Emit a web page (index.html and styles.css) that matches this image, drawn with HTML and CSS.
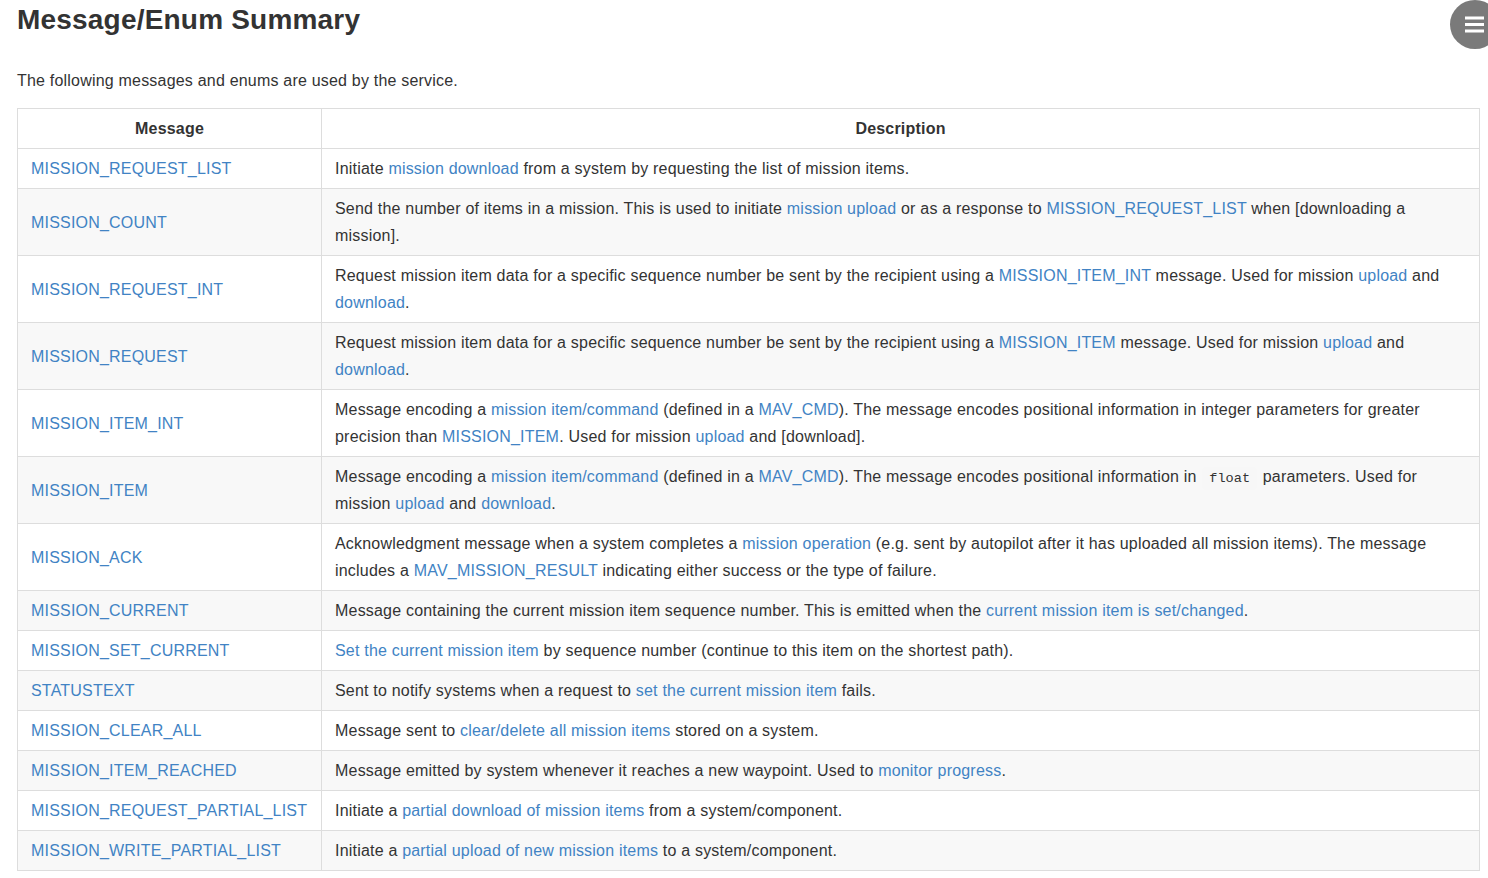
FILE: index.html
```html
<!DOCTYPE html>
<html>
<head>
<meta charset="utf-8">
<link rel="stylesheet" href="styles.css">
</head>
<body>
<div class="page">
  <h2 class="title">Message/Enum Summary</h2>
  <p class="intro">The following messages and enums are used by the service.</p>
  <table class="summary">
    <colgroup><col class="col-msg"><col class="col-desc"></colgroup>
    <thead>
      <tr><th>Message</th><th>Description</th></tr>
    </thead>
    <tbody>
      <tr><td><a href="#">MISSION_REQUEST_LIST</a></td><td>Initiate <a href="#">mission download</a> from a system by requesting the list of mission items.</td></tr>
      <tr><td><a href="#">MISSION_COUNT</a></td><td>Send the number of items in a mission. This is used to initiate <a href="#">mission upload</a> or as a response to <a href="#">MISSION_REQUEST_LIST</a> when [downloading a mission].</td></tr>
      <tr><td><a href="#">MISSION_REQUEST_INT</a></td><td>Request mission item data for a specific sequence number be sent by the recipient using a <a href="#">MISSION_ITEM_INT</a> message. Used for mission <a href="#">upload</a> and <a href="#">download</a>.</td></tr>
      <tr><td><a href="#">MISSION_REQUEST</a></td><td>Request mission item data for a specific sequence number be sent by the recipient using a <a href="#">MISSION_ITEM</a> message. Used for mission <a href="#">upload</a> and <a href="#">download</a>.</td></tr>
      <tr><td><a href="#">MISSION_ITEM_INT</a></td><td>Message encoding a <a href="#">mission item/command</a> (defined in a <a href="#">MAV_CMD</a>). The message encodes positional information in integer parameters for greater precision than <a href="#">MISSION_ITEM</a>. Used for mission <a href="#">upload</a> and [download].</td></tr>
      <tr><td><a href="#">MISSION_ITEM</a></td><td>Message encoding a <a href="#">mission item/command</a> (defined in a <a href="#">MAV_CMD</a>). The message encodes positional information in <code>float</code> parameters. Used for mission <a href="#">upload</a> and <a href="#">download</a>.</td></tr>
      <tr><td><a href="#">MISSION_ACK</a></td><td>Acknowledgment message when a system completes a <a href="#">mission operation</a> (e.g. sent by autopilot after it has uploaded all mission items). The message includes a <a href="#">MAV_MISSION_RESULT</a> indicating either success or the type of failure.</td></tr>
      <tr><td><a href="#">MISSION_CURRENT</a></td><td>Message containing the current mission item sequence number. This is emitted when the <a href="#">current mission item is set/changed</a>.</td></tr>
      <tr><td><a href="#">MISSION_SET_CURRENT</a></td><td><a href="#">Set the current mission item</a> by sequence number (continue to this item on the shortest path).</td></tr>
      <tr><td><a href="#">STATUSTEXT</a></td><td>Sent to notify systems when a request to <a href="#">set the current mission item</a> fails.</td></tr>
      <tr><td><a href="#">MISSION_CLEAR_ALL</a></td><td>Message sent to <a href="#">clear/delete all mission items</a> stored on a system.</td></tr>
      <tr><td><a href="#">MISSION_ITEM_REACHED</a></td><td>Message emitted by system whenever it reaches a new waypoint. Used to <a href="#">monitor progress</a>.</td></tr>
      <tr><td><a href="#">MISSION_REQUEST_PARTIAL_LIST</a></td><td>Initiate a <a href="#">partial download of mission items</a> from a system/component.</td></tr>
      <tr><td><a href="#">MISSION_WRITE_PARTIAL_LIST</a></td><td>Initiate a <a href="#">partial upload of new mission items</a> to a system/component.</td></tr>
    </tbody>
  </table>
</div>
<button class="menu-btn" aria-label="Menu">
  <svg width="19" height="17" viewBox="0 0 19 17"><rect x="0" y="0.5" width="19" height="3" fill="#fff"/><rect x="0" y="7" width="19" height="3" fill="#fff"/><rect x="0" y="13.5" width="19" height="3" fill="#fff"/></svg>
</button>
</body>
</html>
```

FILE: styles.css
```css
html, body {
  margin: 0;
  padding: 0;
  background: #fff;
}
body {
  font-family: "Liberation Sans", Arial, Helvetica, sans-serif;
  font-size: 16px;
  line-height: 27px;
  letter-spacing: 0.2px;
  color: #333;
  overflow: hidden;
}
.page {
  padding: 0 8px 0 17px;
}
.title {
  font-size: 28px;
  font-weight: bold;
  line-height: 34px;
  margin: 3px 0 0 0;
  color: #333;
}
.intro {
  margin: 30px 0 14px 0;
}
a {
  color: #4183c4;
  text-decoration: none;
}
.summary {
  width: 1463px;
  border-collapse: collapse;
  border-spacing: 0;
  table-layout: fixed;
}
.col-msg { width: 304px; }
.summary th, .summary td {
  border: 1px solid #ddd;
  padding: 6px 13px;
  line-height: 27px;
  text-align: left;
  vertical-align: middle;
}
.summary th {
  font-weight: bold;
  text-align: center;
}
.summary tbody tr:nth-child(odd) {
  background: #fff;
}
.summary tbody tr:nth-child(even) {
  background: #f8f8f8;
}
code {
  font-family: "Liberation Mono", "DejaVu Sans Mono", monospace;
  font-size: 13.6px;
  letter-spacing: 0;
  line-height: 1;
  background: #f7f7f7;
  padding: 4px 7px;
  margin: 0 1px;
  border-radius: 3px;
}
.menu-btn {
  position: fixed;
  top: 0;
  left: 1450px;
  width: 50px;
  height: 49px;
  border-radius: 50%;
  background: #7a7a7a;
  border: none;
  padding: 0 0 0 15px;
  display: flex;
  align-items: center;
  cursor: pointer;
}
```
